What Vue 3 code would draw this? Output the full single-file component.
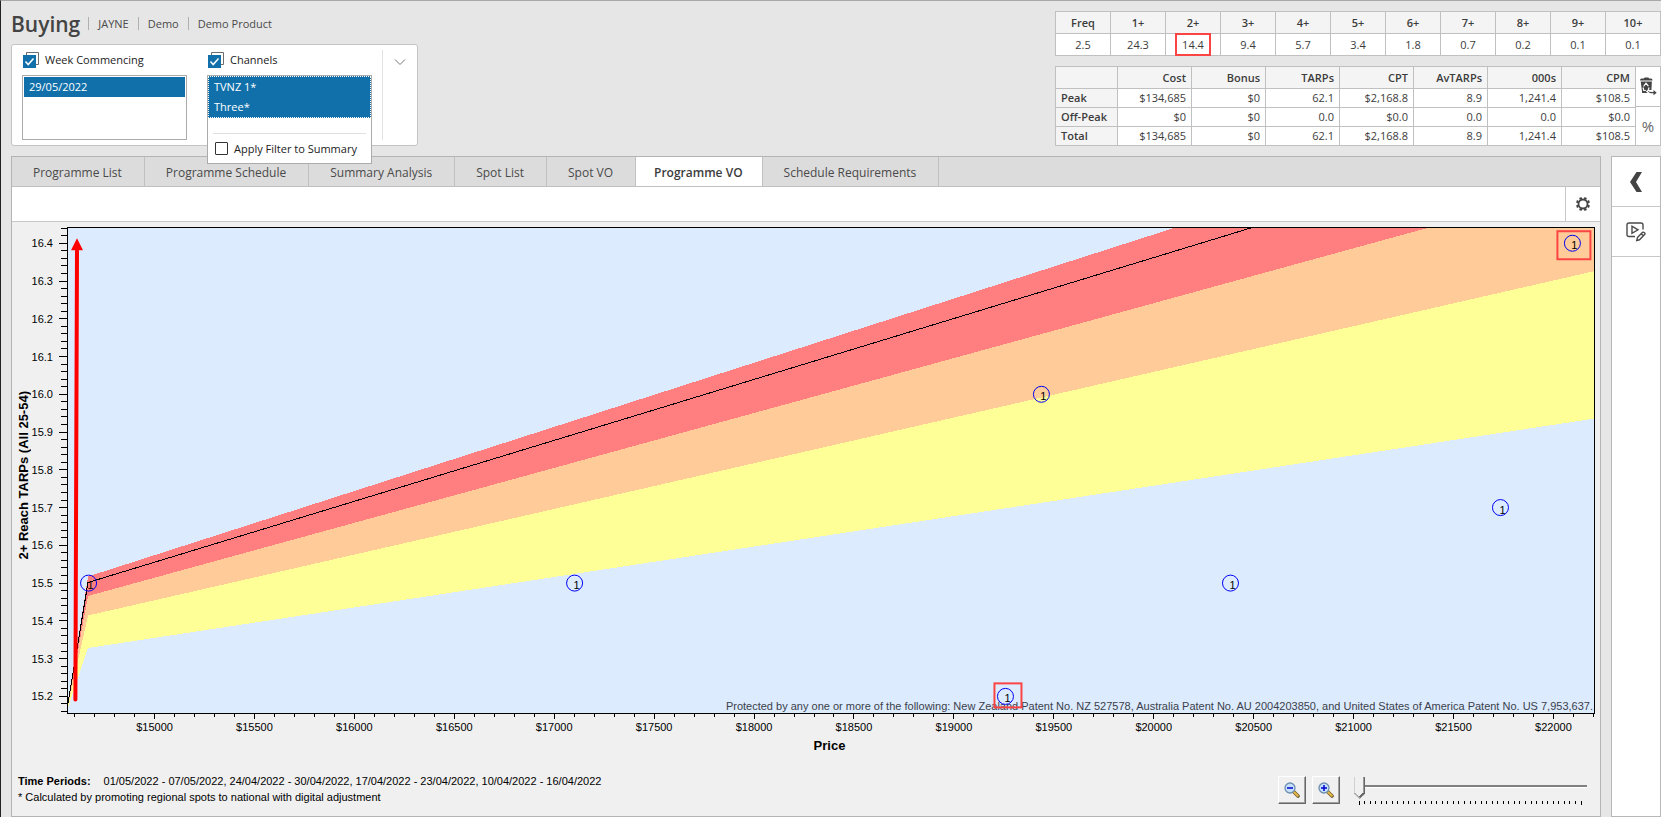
<script setup>
import { ref } from 'vue'

const crumbs = ['JAYNE', 'Demo', 'Demo Product']
const allWeeks = ref(true)
const allChannels = ref(true)
const applyFilter = ref(false)
const weeks = ref(['29/05/2022'])
const channels = ref(['TVNZ 1*', 'Three*'])
const zoom = ref(0)

const freqHead = ['Freq', '1+', '2+', '3+', '4+', '5+', '6+', '7+', '8+', '9+', '10+']
const freqRow = ['2.5', '24.3', '14.4', '9.4', '5.7', '3.4', '1.8', '0.7', '0.2', '0.1', '0.1']

const costHead = ['Cost', 'Bonus', 'TARPs', 'CPT', 'AvTARPs', '000s', 'CPM']
const costRows = [
  { name: 'Peak', cells: ['$134,685', '$0', '62.1', '$2,168.8', '8.9', '1,241.4', '$108.5'] },
  { name: 'Off-Peak', cells: ['$0', '$0', '0.0', '$0.0', '0.0', '0.0', '$0.0'] },
  { name: 'Total', cells: ['$134,685', '$0', '62.1', '$2,168.8', '8.9', '1,241.4', '$108.5'] }
]

const tabs = ['Programme List', 'Programme Schedule', 'Summary Analysis', 'Spot List', 'Spot VO', 'Programme VO', 'Schedule Requirements']
const activeTab = ref('Programme VO')

// Chart domain
const minPrice = 14562
const maxPrice = 22203
const minReach = 15.156
const maxReach = 16.443
const px = (price) => ((price - minPrice) / (maxPrice - minPrice)) * 100 + '%'
const py = (reach) => ((maxReach - reach) / (maxReach - minReach)) * 100 + '%'

const xTicks = []
for (let p = 14600; p <= 22200; p += 100) xTicks.push({ value: p, major: p % 500 === 0 })
const yTicks = []
for (let r = 1516; r <= 1644; r += 2) yTicks.push({ value: r / 100, major: r % 10 === 0 })

const points = [
  { price: 14670, reach: 15.5 },
  { price: 17102, reach: 15.5 },
  { price: 19438, reach: 16.0 },
  { price: 20384, reach: 15.5 },
  { price: 21735, reach: 15.7 },
  { price: 19258, reach: 15.2, box: { x: -11, y: -13, width: 27, height: 24 } },
  { price: 22095, reach: 16.4, box: { x: -15, y: -12, width: 33, height: 28 } }
]
const sliderTicks = Array.from({ length: 41 }, (_, i) => i)
</script>

<template>
  <div class="app">
    <header class="header">
      <div class="header-left">
        <div class="title-row">
          <h1>Buying</h1>
          <span v-for="c in crumbs" :key="c" class="crumb">{{ c }}</span>
        </div>
        <section class="filters">
          <div class="filter">
            <label class="filter-label">
              <span class="stack-check">
                <svg class="stack-back" viewBox="0 0 16 16"><path d="M3.500 3V.5h12v12H13" fill="none" stroke="#6d6d6d" /></svg>
                <input v-model="allWeeks" type="checkbox" />
                <svg v-if="allWeeks" class="stack-tick" viewBox="0 0 13 13"><path d="M2.500 6.500 5.200 9.500 10.500 3.500" fill="none" stroke="#fff" stroke-width="1.500" /></svg>
              </span>
              Week Commencing
            </label>
            <select v-model="weeks" class="list weeks" multiple size="2" aria-label="Week Commencing">
              <option>29/05/2022</option>
            </select>
          </div>
          <div class="filter">
            <label class="filter-label">
              <span class="stack-check">
                <svg class="stack-back" viewBox="0 0 16 16"><path d="M3.500 3V.5h12v12H13" fill="none" stroke="#6d6d6d" /></svg>
                <input v-model="allChannels" type="checkbox" />
                <svg v-if="allChannels" class="stack-tick" viewBox="0 0 13 13"><path d="M2.500 6.500 5.200 9.500 10.500 3.500" fill="none" stroke="#fff" stroke-width="1.500" /></svg>
              </span>
              Channels
            </label>
            <div class="popup-anchor">
              <div class="popup">
                <select v-model="channels" class="list channels" multiple size="2" aria-label="Channels">
                  <option>TVNZ 1*</option>
                  <option>Three*</option>
                </select>
                <label class="apply">
                  <input v-model="applyFilter" type="checkbox" />
                  Apply Filter to Summary
                </label>
              </div>
            </div>
          </div>
          <button class="expand" type="button" aria-label="Expand filters">
            <svg width="12" height="8" viewBox="0 0 12 8"><path d="M1 1.500 6 6.500 11 1.500" fill="none" stroke="#777" /></svg>
          </button>
        </section>
      </div>

      <div class="header-right">
        <table class="freq">
          <thead>
            <tr><th v-for="h in freqHead" :key="h" scope="col">{{ h }}</th></tr>
          </thead>
          <tbody>
            <tr>
              <td v-for="(v, i) in freqRow" :key="i" :class="{ marked: i === 2 }">{{ v }}</td>
            </tr>
          </tbody>
        </table>
        <div class="cost-row">
          <table class="cost">
            <thead>
              <tr>
                <th class="name"></th>
                <th v-for="h in costHead" :key="h" scope="col">{{ h }}</th>
              </tr>
            </thead>
            <tbody>
              <tr v-for="r in costRows" :key="r.name">
                <th class="name" scope="row">{{ r.name }}</th>
                <td v-for="(c, i) in r.cells" :key="i">{{ c }}</td>
              </tr>
            </tbody>
          </table>
          <div class="cost-tools">
            <button type="button" aria-label="Recycle">
              <svg width="17" height="19" viewBox="0 0 17 19">
                <path d="M4 1.500Q4 .5 5 .5h3q1 0 1 1h2q1.500 0 1.500 2H0q0-2 1.500-2z" fill="#444" />
                <path d="M.7 4.500h11.200l-.5 8.500H9v3H2.200z" fill="#444" />
                <path d="M3.500 9.500 6 6.200l2.400 3M3 10.500l.8 3h2M9 10.500l-.7 3" fill="none" stroke="#fff" stroke-width="1.200" />
                <path d="M7 13.500q2 2.500 7 1.500" fill="none" stroke="#fff" stroke-width="3" />
                <path d="M7.500 13.500q2 2 6 1.500v-2l3.200 2.700-3.200 2.600v-2q-4.500.5-6-2.800z" fill="#444" />
              </svg>
            </button>
            <button type="button" class="pct">%</button>
          </div>
        </div>
      </div>
    </header>

    <div class="body">
      <main class="panel">
        <nav class="tabs" role="tablist">
          <button
            v-for="t in tabs" :key="t" type="button" role="tab" class="tab"
            :class="{ active: t === activeTab }" :aria-selected="t === activeTab" @click="activeTab = t"
          >{{ t }}</button>
        </nav>
        <div class="toolbar">
          <button type="button" class="gear" aria-label="Settings">
            <svg width="16" height="16" viewBox="0 0 16 16">
              <circle cx="8" cy="8" r="4.500" fill="none" stroke="#444" stroke-width="1.800" />
              <g stroke="#444" stroke-width="2.600">
                <path v-for="a in 8" :key="a" d="M8 1v2" :transform="`rotate(${a * 45 - 22.5} 8 8)`" />
              </g>
            </svg>
          </button>
        </div>

        <section class="chart">
          <div class="plot-row">
            <div class="y-title"><span>2+ Reach TARPs (All 25-54)</span></div>
            <div class="plot">
              <svg class="plot-svg" role="img" aria-label="Reach against price">
                <rect width="100%" height="100%" fill="#ddebff" />
                <svg class="free" width="100%" height="100%" viewBox="0 0 1527 486" preserveAspectRatio="none" shape-rendering="crispEdges">
                  <path d="M0 482 21 349.500 1110 0H1528V44L21 388.500z" fill="#ff7e80" />
                  <path d="M0 483 21 369 1364 0H1528V486H0z" fill="#ffcb98" />
                  <path d="M0 483 21 388.500 1528 44V192L21 421 0 484z" fill="#ffff98" />
                  <path d="M0 484 21 421 1528 191.500V486H0z" fill="#ddebff" />
                  <path d="M0 482 21 355.500 1187 0" fill="none" stroke="#000" vector-effect="non-scaling-stroke" />
                </svg>

                <text class="patent" x="100%" y="100%" dx="-1" dy="-3" text-anchor="end">Protected by any one or more of the following: New Zealand Patent No. NZ 527578, Australia Patent No. AU 2004203850, and United States of America Patent No. US 7,953,637.</text>

                <svg v-for="(p, i) in points" :key="i" class="free" :x="px(p.price)" :y="py(p.reach)">
                  <circle r="8" fill="none" stroke="#0000f0" />
                  <text class="tick-label" x="2" y="6" text-anchor="middle">1</text>
                  <rect v-if="p.box" v-bind="p.box" fill="none" stroke="#fb4444" stroke-width="2" />
                </svg>

                <line :x1="px(14604)" :y1="py(15.192)" :x2="px(14612)" :y2="py(16.38)" stroke="#fe0000" stroke-width="4" stroke-linecap="round" />
                <svg class="free" :x="px(14612)" :y="py(16.413)"><path d="M0 0 6 12H-6z" fill="#fe0000" /></svg>

                <rect width="100%" height="100%" fill="none" stroke="#000" shape-rendering="crispEdges" />

                <svg v-for="t in xTicks" :key="'x' + t.value" class="free" :x="px(t.value)" y="100%">
                  <line :y2="t.major ? 6 : 4" stroke="#000" shape-rendering="crispEdges" />
                  <text v-if="t.major" class="tick-label" y="18" text-anchor="middle">${{ t.value }}</text>
                </svg>
                <svg v-for="t in yTicks" :key="'y' + t.value" class="free" x="0" :y="py(t.value)">
                  <line :x1="t.major ? -8 : -6" stroke="#000" shape-rendering="crispEdges" />
                  <text v-if="t.major" class="tick-label" x="-14" y="4" text-anchor="end">{{ t.value.toFixed(1) }}</text>
                </svg>
              </svg>
            </div>
          </div>
          <div class="x-title">Price</div>
          <footer class="chart-foot">
            <div class="notes">
              <p><b>Time Periods:</b><span>01/05/2022 - 07/05/2022, 24/04/2022 - 30/04/2022, 17/04/2022 - 23/04/2022, 10/04/2022 - 16/04/2022</span></p>
              <p>* Calculated by promoting regional spots to national with digital adjustment</p>
            </div>
            <div class="zoom">
              <button v-for="s in ['out', 'in']" :key="s" type="button" class="zoom-btn" :aria-label="'Zoom ' + s">
                <svg width="16" height="16" viewBox="0 0 16 16">
                  <path d="M9.500 9.500 14 14" stroke="#6b5a2c" stroke-width="3.600" stroke-linecap="round" />
                  <path d="M10 10 13.800 13.800" stroke="#e8b84a" stroke-width="2" stroke-linecap="round" />
                  <circle cx="6" cy="6" r="5" fill="#c6e2fa" stroke="#6f8fae" stroke-width="1.300" />
                  <path d="M3 6h6" stroke="#0000d0" stroke-width="1.500" />
                  <path v-if="s === 'in'" d="M6 3v6" stroke="#0000d0" stroke-width="1.500" />
                </svg>
              </button>
              <div class="slider">
                <input v-model="zoom" type="range" min="0" max="40" aria-label="Zoom level" />
                <svg class="slider-ticks">
                  <line
                    v-for="i in sliderTicks" :key="i" :x1="i * 2.5 + '%'" :x2="i * 2.5 + '%'"
                    :y2="i === 0 || i === 40 ? 4 : 3" stroke="#000" shape-rendering="crispEdges"
                  />
                </svg>
              </div>
            </div>
          </footer>
        </section>
      </main>

      <aside class="side">
        <button type="button" aria-label="Collapse">
          <svg width="14" height="22" viewBox="0 0 14 22"><path d="M7.500 1H13L7 11l6 10H7.500L1 11z" fill="#444" /></svg>
        </button>
        <button type="button" aria-label="Edit media">
          <svg width="20" height="20" viewBox="0 0 20 20" fill="none" stroke="#4a4a4a" stroke-width="1.400">
            <path d="M9 14.500H3Q1 14.500 1 12.500V3Q1 1 3 1H15Q17 1 17 3V7.500" />
            <path d="M6 4.200V11.300L12 7.800z" />
            <path d="M11.500 15.500 16.500 10.300Q17.500 9.800 18.500 10.800T18.600 12.600L13.500 17.800 10.700 18.500z M15.300 11.700 17.300 13.700" />
          </svg>
        </button>
      </aside>
    </div>
  </div>
</template>

<style>
body {
  margin: 0;
  background: #e6e6e6;
}
</style>

<style scoped>
* {
  box-sizing: border-box;
}
.app {
  display: flex;
  flex-direction: column;
  min-height: 100vh;
  background: #e6e6e6;
  border-top: 1px solid #a8a8a8;
  border-left: 1px solid #222;
  color: #3c3c3c;
  font: 12px/16px "Open Sans", "Noto Sans", sans-serif;
}
button,
select,
input {
  margin: 0;
  font: inherit;
  color: inherit;
}
button {
  display: flex;
  align-items: center;
  justify-content: center;
  padding: 0;
  border: 0;
  background: none;
}
.header {
  display: flex;
  justify-content: space-between;
  padding: 0 0 10px 10px;
}
.title-row {
  display: flex;
  align-items: center;
  height: 43px;
  padding-top: 2px;
  font-size: 11px;
}
h1 {
  margin: 0 8px 0 0;
  font-size: 21px;
  line-height: 28px;
  font-weight: 600;
  color: #444;
}
.crumb {
  padding: 0 9px;
  border-left: 1px solid #b0b0b0;
  line-height: 13px;
  color: #4a4a4a;
}
.filters {
  display: flex;
  width: 407px;
  height: 102px;
  padding: 5px 10px;
  gap: 20px;
  background: #fff;
  border: 1px solid #c4c4c4;
  border-radius: 3px;
}
.filter {
  width: 165px;
}
.filter-label {
  display: flex;
  align-items: center;
  gap: 6px;
  height: 25px;
  padding: 0 1px 5px;
  font-size: 11px;
}
.filter-label,
.apply {
  color: #222;
}
.stack-check {
  position: relative;
  display: flex;
  align-items: flex-end;
  width: 16px;
  height: 16px;
}
.stack-check input {
  appearance: none;
  width: 13px;
  height: 13px;
  background: #fff;
  border: 1px solid #1170aa;
}
.stack-check input:checked {
  background: #1170aa;
}
.stack-back {
  position: absolute;
  inset: 0;
}
.stack-tick {
  position: absolute;
  left: 0;
  bottom: 0;
  width: 13px;
  height: 13px;
  pointer-events: none;
}
.list {
  display: block;
  width: 100%;
  padding: 1px;
  overflow: hidden;
  background: #fff;
  border: 1px solid #ababab;
  border-radius: 0;
  outline: 0;
  font-size: 11px;
}
.weeks {
  height: 65px;
}
.list option {
  height: 20px;
  padding: 2px 5px;
  line-height: 16px;
  min-height: 20px;
}
.list option:checked {
  background: #1170aa linear-gradient(#1170aa, #1170aa);
  color: #fff;
  -webkit-text-fill-color: #fff;
}
.popup-anchor {
  position: relative;
}
.popup {
  position: absolute;
  z-index: 2;
  top: 0;
  left: 0;
  width: 100%;
  background: #fff;
  border: 1px solid #ababab;
}
.channels {
  height: 42px;
  padding: 0;
  border: 1px dotted #fff;
  background: #1170aa;
}
.apply {
  display: flex;
  align-items: center;
  gap: 6px;
  margin: 15px 5px 0;
  padding: 0 2px;
  height: 30px;
  border-top: 1px solid #e0e0e0;
  white-space: nowrap;
  font-size: 11px;
}
.apply input {
  appearance: none;
  flex: none;
  width: 13px;
  height: 13px;
  background: #fff;
  border: 1px solid #333;
  border-radius: 1px;
}
.expand {
  flex: 1;
  margin-left: -10px;
  padding: 0 0 66px 9px;
  border-left: 1px solid #e2e2e2;
}
.header-right {
  padding-top: 10px;
}
table {
  border-collapse: collapse;
  table-layout: fixed;
  background: #fff;
}
th,
td {
  padding: 0;
  border: 1px solid #c0c0c0;
  font-weight: 400;
  line-height: 18px;
}
th {
  background: #f4f4f4;
  font-weight: 600;
  font-size: 11px;
}
.freq {
  width: 606px;
}
.freq th,
.freq td {
  height: 22px;
  text-align: center;
}
.freq td,
.cost td {
  font-size: 11px;
}
.marked {
  position: relative;
}
.marked::after {
  content: "";
  position: absolute;
  inset: -1px 9px;
  border: 2px solid #fb4444;
}
.cost-row {
  display: flex;
  margin-top: 10px;
}
.cost {
  width: 581px;
}
.cost th,
.cost td {
  height: 19px;
  padding-right: 5px;
  text-align: right;
}
.cost thead th {
  height: 22px;
}
.cost .name {
  width: 62px;
  padding: 0 0 0 5px;
  text-align: left;
}
.cost-tools {
  display: flex;
  flex-direction: column;
  flex: 1;
  background: #fff;
  border: 1px solid #c0c0c0;
  border-left: 0;
}
.cost-tools button {
  flex: 1;
}
.cost-tools .pct {
  border-top: 1px solid #c0c0c0;
  font-size: 15px;
  color: #666;
}
.body {
  display: flex;
  flex: 1;
  gap: 10px;
  padding-left: 10px;
}
.panel {
  display: flex;
  flex: 1;
  flex-direction: column;
  min-width: 0;
  background: #f0f0f0;
  border: 1px solid #b4b4b4;
}
.tabs {
  display: flex;
  height: 30px;
  background: #dcdcdc;
  border-bottom: 1px solid #c0c0c0;
}
.tab {
  padding: 2px 22px 0 21px;
  border-right: 1px solid #c0c0c0;
  color: #4a4a4a;
}
.tab.active {
  padding: 2px 19px 0 18px;
  background: #fff;
  font-weight: 600;
  color: #3c3c3c;
}
.toolbar {
  display: flex;
  justify-content: flex-end;
  height: 35px;
  background: #fff;
  border-bottom: 1px solid #c8c8c8;
}
.gear {
  width: 35px;
  border-left: 1px solid #c8c8c8;
}
.chart {
  display: flex;
  flex: 1;
  flex-direction: column;
  padding: 5px 6px 0 0;
  color: #000;
  font-family: "Liberation Sans", Arial, sans-serif;
}
.plot-row {
  display: flex;
  flex: 1;
  min-height: 300px;
}
.y-title {
  display: flex;
  align-items: center;
  justify-content: center;
  width: 55px;
  padding: 10px 32px 0 0;
  font-size: 13px;
  font-weight: 700;
}
.y-title span {
  writing-mode: vertical-rl;
  transform: rotate(180deg);
  white-space: nowrap;
}
.plot {
  position: relative;
  flex: 1;
}
.plot-svg {
  position: absolute;
  width: 100%;
  height: 100%;
  overflow: visible;
}
.free {
  overflow: visible;
}
.tick-label {
  font-size: 11px;
}
.patent {
  font-size: 11px;
  fill: #3a3f4a;
}
.x-title {
  margin: 25px 0 0 53px;
  text-align: center;
  font-size: 13px;
  font-weight: 700;
}
.chart-foot {
  display: flex;
  align-items: center;
  justify-content: space-between;
  height: 62px;
  padding: 8px 7px 0 6px;
}
.notes p {
  margin: 0;
  font-size: 11px;
}
.notes b {
  margin-right: 13px;
}
.zoom {
  display: flex;
  gap: 6px;
  padding-top: 4px;
}
.zoom-btn {
  width: 28px;
  height: 28px;
  border: 1px solid;
  border-color: #fff #666 #666 #fff;
  box-shadow: inset -1px -1px #a0a0a0;
}
.slider {
  width: 233px;
  margin-left: 8px;
  padding-top: 1px;
}
.slider input {
  display: block;
  appearance: none;
  width: 100%;
  height: 22px;
  background: linear-gradient(#808080, #808080) 0 8px / 100% 2px no-repeat, linear-gradient(#fff, #fff) 0 10px / 100% 1px no-repeat;
}
.slider input::-webkit-slider-thumb {
  appearance: none;
  width: 11px;
  height: 22px;
  background:
    linear-gradient(45deg, #aaa 5px, transparent 5px) 0 100% / 6px 6px no-repeat,
    linear-gradient(-45deg, #666 6px, transparent 6px) 100% 100% / 6px 6px no-repeat,
    linear-gradient(90deg, #d0d0d0 1px, #f0f0f0 1px, #f0f0f0 9px, #999 9px, #999 10px, #666 10px);
  clip-path: polygon(0 0, 100% 0, 100% 75%, 50% 100%, 0 75%);
}
.slider-ticks {
  display: block;
  width: 222px;
  height: 5px;
  margin: 2px 0 0 5px;
  overflow: visible;
}
.side {
  width: 50px;
  background: #fff;
  border: 1px solid #b8b8b8;
}
.side button {
  width: 100%;
  height: 50px;
  border-bottom: 1px solid #c8c8c8;
}
</style>
